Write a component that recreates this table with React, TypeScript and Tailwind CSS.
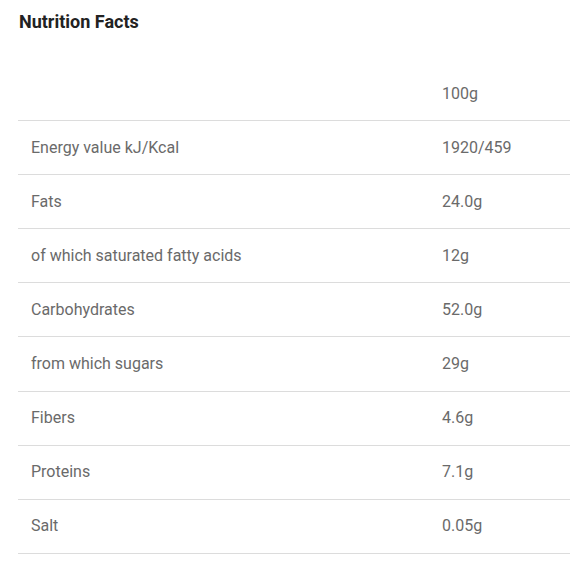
const rows: [string, string][] = [
  ['', '100g'],
  ['Energy value kJ/Kcal', '1920/459'],
  ['Fats', '24.0g'],
  ['of which saturated fatty acids', '12g'],
  ['Carbohydrates', '52.0g'],
  ['from which sugars', '29g'],
  ['Fibers', '4.6g'],
  ['Proteins', '7.1g'],
  ['Salt', '0.05g'],
];

export default function App() {
  return (
    <div className="w-[570px] h-[575px] bg-white font-['Roboto',sans-serif] overflow-hidden">
      <h2 className="pl-[19px] pt-[11px] text-[18px] leading-[22px] font-bold text-[#222]">Nutrition Facts</h2>
      <div className="ml-[18px] mt-[34px]">
        {rows.map(([label, value], i) => (
          <div
            key={i}
            className="grid grid-cols-[412px_1fr] h-[54.1px] items-center border-b border-[#dcdcdc] text-[16px] text-[#6a6a6a]"
          >
            <div className="pl-[13px]">{label}</div>
            <div className="pl-[12px]">{value}</div>
          </div>
        ))}
      </div>
    </div>
  );
}
